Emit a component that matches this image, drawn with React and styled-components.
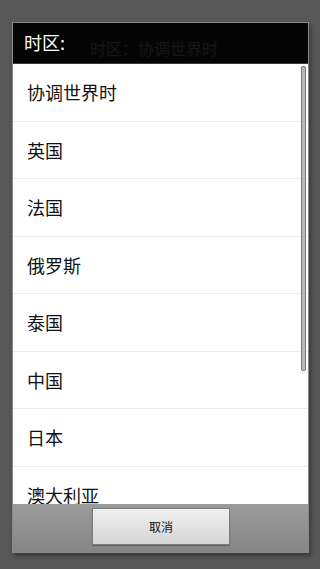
import React from "react";
import styled, { createGlobalStyle } from "styled-components";

const Global = createGlobalStyle`
  html, body { margin: 0; padding: 0; background: #575757; }
  body { font-family: "Noto Sans CJK SC", "Noto Sans", sans-serif; }
`;

const Screen = styled.div`
  width: 320px;
  height: 569px;
  box-sizing: border-box;
  padding: 22px 11px 16px 12px;
  display: flex;
  flex-direction: column;
  background: #575757;
`;

const Dialog = styled.div`
  flex: 1;
  display: flex;
  flex-direction: column;
  border: 1px solid #8a8a8a;
  box-shadow: 2px 3px 4px rgba(0, 0, 0, 0.35);
  overflow: hidden;
`;

const Header = styled.div`
  position: relative;
  height: 40px;
  flex: none;
  background: #050505;
  display: flex;
  align-items: center;
  padding: 0 11px;
  border-bottom: 1px solid #3a3a3a;
`;

const Title = styled.div`
  color: #fff;
  font-size: 18px;
  line-height: 1;
  margin-top: -2px;
`;

const Ghost = styled.div`
  position: absolute;
  left: 77px;
  top: 17px;
  color: #161616;
  font-size: 16px;
  line-height: 1;
`;

const ListWrap = styled.div`
  position: relative;
  flex: 1;
  background: #fff;
  overflow: hidden;
`;

const Row = styled.div`
  height: 57.5px;
  box-sizing: border-box;
  display: flex;
  align-items: center;
  padding: 0 14px;
  border-bottom: 1px solid #ececec;
  font-size: 18px;
  color: #111;
`;

const Scrollbar = styled.div`
  position: absolute;
  right: 2px;
  top: 2px;
  width: 3px;
  height: 303px;
  background: #b8b8b8;
  border: 1px solid #7a7a7a;
  border-radius: 2px;
`;

const Footer = styled.div`
  flex: none;
  height: 48px;
  display: flex;
  justify-content: center;
  align-items: flex-start;
  padding-top: 4px;
  box-sizing: border-box;
  background: linear-gradient(#9c9c9c, #858585);
`;

const Button = styled.button`
  width: 138px;
  height: 37px;
  margin-left: 1px;
  border: 1px solid #7c7c7c;
  background: linear-gradient(#efefef, #d6d6d6);
  color: #111;
  font-family: "Noto Sans CJK SC", sans-serif;
  font-size: 12px;
  padding: 0;
  box-shadow: 0 1px 1px rgba(0,0,0,0.25);
`;

const zones = ["协调世界时", "英国", "法国", "俄罗斯", "泰国", "中国", "日本", "澳大利亚"];

export default function App() {
  return (
    <>
      <Global />
      <Screen>
        <Dialog>
          <Header>
            <Title>时区:</Title>
            <Ghost>时区：协调世界时</Ghost>
          </Header>
          <ListWrap>
            {zones.map((z) => (
              <Row key={z}>{z}</Row>
            ))}
            <Scrollbar />
          </ListWrap>
          <Footer>
            <Button>取消</Button>
          </Footer>
        </Dialog>
      </Screen>
    </>
  );
}
